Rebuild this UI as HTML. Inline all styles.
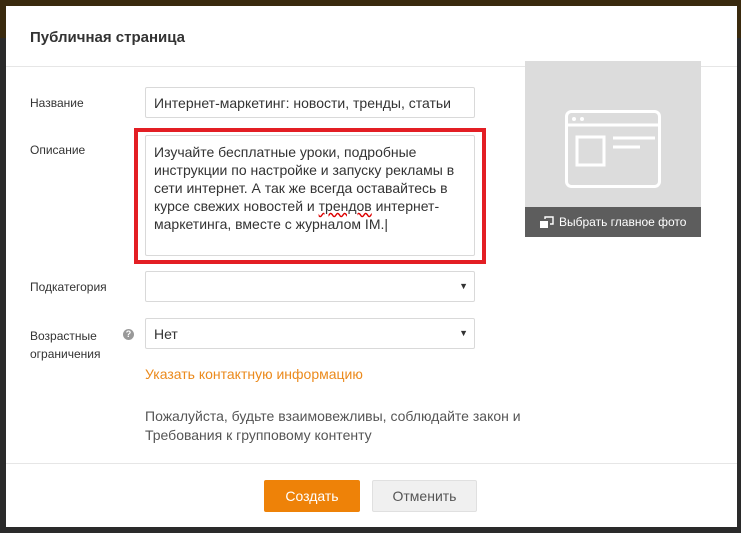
<!DOCTYPE html>
<html><head><meta charset="utf-8"><style>
body{margin:0;width:741px;height:533px;background:#2a2a2a;position:relative;overflow:hidden;font-family:"Liberation Sans",Arial,sans-serif;}
.top{position:absolute;left:0;top:0;width:741px;height:38px;background:#3a2a0e;}
.m{position:absolute;left:6px;top:6px;width:731px;height:521px;background:#fff;}
.a{position:absolute;}
.lbl{font-size:12px;color:#333;}
.inp{position:absolute;border:1px solid #d9d9d9;border-radius:2px;background:#fff;box-sizing:border-box;font-size:14px;color:#333;}
.arr{position:absolute;right:6px;top:9px;font-size:9px;color:#333;}
</style></head><body>
<div class="top"></div>
<div class="m"></div>
<div class="a" style="left:30px;top:29px;font-size:15px;font-weight:bold;color:#333;">Публичная страница</div>
<div class="a" style="left:6px;top:66px;width:731px;height:1px;background:#e6e6e6;"></div>
<div class="a lbl" style="left:30px;top:96px;">Название</div>
<div class="inp" style="left:145px;top:87px;width:330px;height:31px;padding:7px 0 0 8px;">Интернет-маркетинг: новости, тренды, статьи</div>
<div class="a lbl" style="left:30px;top:143px;">Описание</div>
<div class="a" style="left:134px;top:128px;width:344px;height:128px;border:4px solid #e31e24;"></div>
<div class="inp" style="left:145px;top:135px;width:330px;height:121px;padding:7px 8px 0 8px;line-height:18px;">Изучайте бесплатные уроки, подробные инструкции по настройке и запуску рекламы в сети интернет. А так же всегда оставайтесь в курсе свежих новостей и <span style="text-decoration:underline wavy #d00;">трендов</span> интернет-маркетинга, вместе с журналом IM.|</div>
<div class="a" style="left:525px;top:61px;width:176px;height:176px;background:#dcdcdc;"></div>
<svg class="a" style="left:565px;top:110px" width="96" height="78" viewBox="0 0 96 78"><g fill="none" stroke="#fff" stroke-width="3"><rect x="1.5" y="1.5" width="93" height="75" rx="5"/><line x1="1.5" y1="15" x2="94.5" y2="15"/><rect x="12" y="27" width="27" height="28"/><line x1="48" y1="28" x2="90" y2="28"/><line x1="48" y1="37" x2="75" y2="37"/></g><circle cx="9" cy="9" r="2" fill="#fff"/><circle cx="17" cy="9" r="2" fill="#fff"/></svg>
<div class="a" style="left:525px;top:207px;width:176px;height:30px;background:#5d5d5d;color:#fff;font-size:12px;line-height:30px;">
<svg style="position:absolute;left:15px;top:9px" width="14" height="13" viewBox="0 0 14 13"><rect x="0" y="5" width="8" height="7" fill="#fff"/><path d="M5 3V1h8v7h-3" fill="none" stroke="#fff" stroke-width="1.4"/></svg>
<span style="position:absolute;left:34px;">Выбрать главное фото</span></div>
<div class="a lbl" style="left:30px;top:280px;">Подкатегория</div>
<div class="inp" style="left:145px;top:271px;width:330px;height:31px;"><span class="arr">▼</span></div>
<div class="a lbl" style="left:30px;top:327px;line-height:18px;">Возрастные<br>ограничения</div>
<div class="a" style="left:123px;top:329px;width:11px;height:11px;border-radius:50%;background:#999;color:#fff;font-size:9px;text-align:center;line-height:11px;font-weight:bold;">?</div>
<div class="inp" style="left:145px;top:318px;width:330px;height:31px;padding:7px 0 0 8px;">Нет<span class="arr">▼</span></div>
<div class="a" style="left:145px;top:366px;font-size:14px;color:#eb8a1c;">Указать контактную информацию</div>
<div class="a" style="left:145px;top:407px;font-size:14px;color:#555;line-height:19px;">Пожалуйста, будьте взаимовежливы, соблюдайте закон и<br>Требования к групповому контенту</div>
<div class="a" style="left:6px;top:463px;width:731px;height:1px;background:#e6e6e6;"></div>
<div class="a" style="left:264px;top:480px;width:96px;height:32px;background:#ee8208;border-radius:2px;color:#fff;font-size:14px;text-align:center;line-height:32px;">Создать</div>
<div class="a" style="left:372px;top:480px;width:105px;height:32px;background:#f0f0f0;border:1px solid #e0e0e0;box-sizing:border-box;border-radius:2px;color:#555;font-size:14px;text-align:center;line-height:30px;">Отменить</div>
</body></html>
